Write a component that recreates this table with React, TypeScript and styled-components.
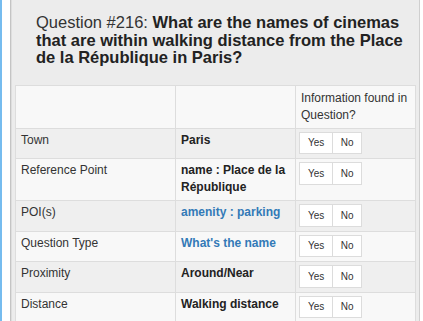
import React from "react";
import styled, { createGlobalStyle } from "styled-components";

const Global = createGlobalStyle`
  html, body { margin: 0; padding: 0; background: #fff; }
  body { font-family: "Liberation Sans", Arial, sans-serif; color: #333; }
`;

const Page = styled.div`
  display: flex;
  align-items: stretch;
  height: 321px;
  overflow: hidden;
`;

const Strip = styled.div`
  width: 2px;
  flex: none;
  background: #76bcef;
  margin-right: 8px;
`;

const Panel = styled.div`
  width: 400px;
  flex: none;
  background: #ececec;
  border-left: 1px solid #c4c4c4;
  border-right: 1px solid #cfcfcf;
  box-shadow: inset 1px 0 0 #dedede;
  padding: 14px 4px 0;
`;

const Title = styled.h3`
  margin: 0 0 18px 21px;
  width: 368px;
  font-size: 16.5px;
  line-height: 17.5px;
  font-weight: normal;
  color: #333;
`;

const Strong = styled.strong`
  font-weight: bold;
  color: #222;
`;

const Table = styled.table`
  width: 400px;
  border-collapse: collapse;
  table-layout: fixed;
  font-size: 12px;
  line-height: 17px;
  border: 1px solid #dddddd;
`;

const Row = styled.tr<{ $dark?: boolean }>`
  background: ${(p) => (p.$dark ? "#efefef" : "#f8f8f8")};
`;

const Cell = styled.td<{ $w?: number; $head?: boolean }>`
  ${(p) => (p.$w ? `width: ${p.$w}px;` : "")}
  padding: ${(p) => (p.$head ? "4px 5px 4px" : "3px 5px 4px")};
  border: 1px solid #dddddd;
  vertical-align: top;
  box-sizing: border-box;
`;

const Value = styled.span<{ $link?: boolean }>`
  font-weight: bold;
  color: ${(p) => (p.$link ? "#337ab7" : "#222")};
`;

const Group = styled.div`
  display: inline-flex;
  vertical-align: top;
  margin-left: -2px;
  height: 22.5px;
`;

const Btn = styled.span<{ $last?: boolean }>`
  display: flex;
  align-items: center;
  justify-content: center;
  height: 22.5px;
  box-sizing: border-box;
  padding: 0 ${(p) => (p.$last ? "7.5px" : "8px")};
  background: #fff;
  border: 1px solid #dcdcdc;
  ${(p) => (p.$last ? "border-left: none;" : "")}
  font-size: 10px;
  color: #333;
`;

const YesNo = () => (
  <Group>
    <Btn>Yes</Btn>
    <Btn $last>No</Btn>
  </Group>
);

const rows: { label: string; value: string; link?: boolean }[] = [
  { label: "Town", value: "Paris" },
  { label: "Reference Point", value: "name : Place de la République" },
  { label: "POI(s)", value: "amenity : parking", link: true },
  { label: "Question Type", value: "What's the name", link: true },
  { label: "Proximity", value: "Around/Near" },
  { label: "Distance", value: "Walking distance" },
];

export default function App() {
  return (
    <>
      <Global />
      <Page>
        <Strip />
        <Panel>
          <Title>
            Question #216:{" "}
            <Strong>
              What are the names of cinemas that are within walking distance
              from the Place de la République in Paris?
            </Strong>
          </Title>
          <Table>
            <tbody>
              <Row>
                <Cell $w={160} $head></Cell>
                <Cell $w={120} $head></Cell>
                <Cell $w={120} $head>
                  Information found in Question?
                </Cell>
              </Row>
              {rows.map((r, i) => (
                <Row key={r.label} $dark={i % 2 === 0}>
                  <Cell>{r.label}</Cell>
                  <Cell>
                    <Value $link={r.link}>{r.value}</Value>
                  </Cell>
                  <Cell>
                    <YesNo />
                  </Cell>
                </Row>
              ))}
            </tbody>
          </Table>
        </Panel>
      </Page>
    </>
  );
}
